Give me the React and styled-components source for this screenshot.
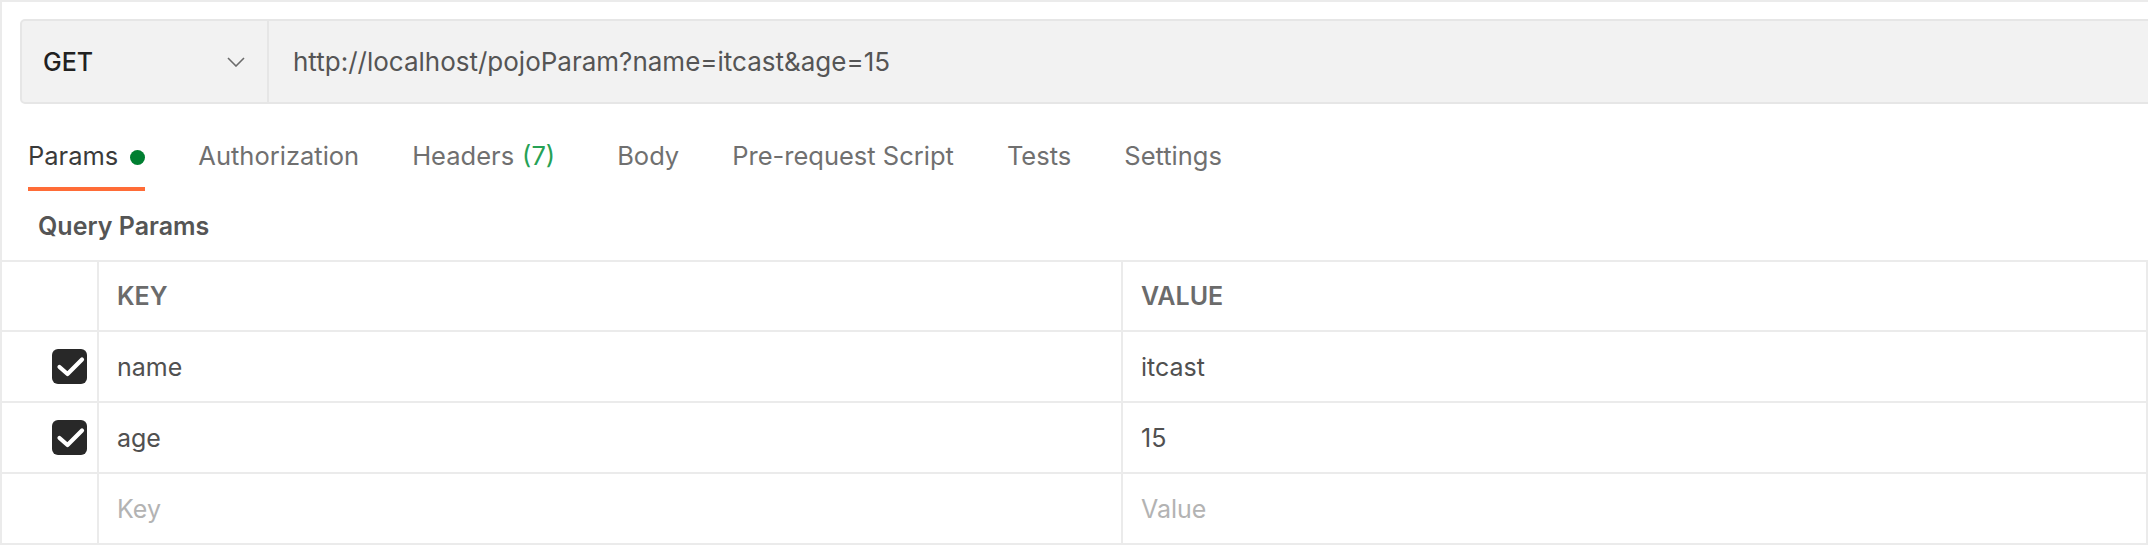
import styled, { createGlobalStyle } from 'styled-components';

const GlobalStyle = createGlobalStyle`
  html, body {
    margin: 0;
    padding: 0;
    background: #fff;
    font-family: Inter, "Noto Sans", sans-serif;
  }
`;

const Page = styled.div`
  width: 2148px;
  height: 545px;
  box-sizing: border-box;
  border-top: 2px solid #ebebeb;
  border-left: 2px solid #ebebeb;
  overflow: hidden;
  display: flex;
  flex-direction: column;
`;

const UrlBar = styled.div`
  display: flex;
  height: 85px;
  box-sizing: border-box;
  margin: 17px -10px 0 18px;
  background: #f2f2f2;
  border: 2px solid #e6e6e6;
  border-radius: 5px;
`;

const MethodSelect = styled.div`
  width: 247px;
  box-sizing: border-box;
  display: flex;
  align-items: center;
  justify-content: space-between;
  padding: 0 22px 0 21px;
  border-right: 2px solid #e6e6e6;
  font-size: 25px;
  font-weight: 500;
  color: #212121;
`;

const UrlInput = styled.div`
  flex: 1;
  display: flex;
  align-items: center;
  padding-left: 24px;
  font-size: 26px;
  color: #555;
`;

const Tabs = styled.div`
  display: flex;
  gap: 53px;
  padding: 20px 0 0 26px;
`;

const Tab = styled.div`
  height: 67px;
  box-sizing: border-box;
  display: flex;
  align-items: center;
  font-size: 25.5px;
  color: ${(p) => (p.$active ? '#3a3a3a' : '#707070')};
  border-bottom: 4px solid ${(p) => (p.$active ? '#ff6c37' : 'transparent')};
`;

const Dot = styled.span`
  width: 15px;
  height: 15px;
  border-radius: 50%;
  background: #007f31;
  margin: 4px 0 0 12px;
`;

const Count = styled.span`
  color: #26a155;
  margin: 0 9px 0 8px;
`;

const SectionLabel = styled.div`
  height: 69px;
  display: flex;
  align-items: center;
  padding-left: 36px;
  font-size: 25px;
  font-weight: 600;
  color: #555;
`;

const Table = styled.div`
  border-top: 2px solid #ebebeb;
  border-right: 2px solid #ebebeb;
`;

const Row = styled.div`
  display: grid;
  grid-template-columns: 97px 1024px 1fr;
  height: ${(p) => (p.$header ? '70px' : '71px')};
  box-sizing: border-box;
  border-bottom: 2px solid #ebebeb;
`;

const Cell = styled.div`
  display: flex;
  align-items: center;
  box-sizing: border-box;
  padding-left: 18px;
  font-size: 25px;
  font-weight: ${(p) => (p.$header ? 600 : 400)};
  color: ${(p) => (p.$placeholder ? '#b3b3b3' : p.$header ? '#6b6b6b' : '#505050')};
  border-right: ${(p) => (p.$last ? 'none' : '2px solid #ebebeb')};
`;

const CheckCell = styled(Cell)`
  justify-content: flex-end;
  padding: 0 10px 0 0;
`;

const Checkbox = styled.div`
  width: 35px;
  height: 35px;
  border-radius: 6px;
  background: #282828;
  display: flex;
  align-items: center;
  justify-content: center;
`;

function Chevron() {
  return (
    <svg width="18" height="10" viewBox="0 0 18 10" fill="none">
      <polyline points="1,1 9,9 17,1" stroke="#6b6b6b" strokeWidth="1.6" />
    </svg>
  );
}

function Check() {
  return (
    <svg width="35" height="35" viewBox="0 0 35 35" fill="none">
      <polyline points="7.5,18 15.5,25 30,10.5" stroke="#fff" strokeWidth="4.2" strokeLinecap="round" strokeLinejoin="round" />
    </svg>
  );
}

const params = [
  { key: 'name', value: 'itcast' },
  { key: 'age', value: '15' },
];

export default function App() {
  return (
    <>
      <GlobalStyle />
      <Page>
        <UrlBar>
          <MethodSelect>
            GET
            <Chevron />
          </MethodSelect>
          <UrlInput>http://localhost/pojoParam?name=itcast&amp;age=15</UrlInput>
        </UrlBar>
        <Tabs>
          <Tab $active>
            Params
            <Dot />
          </Tab>
          <Tab>Authorization</Tab>
          <Tab>
            Headers<Count>(7)</Count>
          </Tab>
          <Tab>Body</Tab>
          <Tab>Pre-request Script</Tab>
          <Tab>Tests</Tab>
          <Tab>Settings</Tab>
        </Tabs>
        <SectionLabel>Query Params</SectionLabel>
        <Table>
          <Row $header>
            <Cell />
            <Cell $header>KEY</Cell>
            <Cell $header $last>VALUE</Cell>
          </Row>
          {params.map((p) => (
            <Row key={p.key}>
              <CheckCell>
                <Checkbox>
                  <Check />
                </Checkbox>
              </CheckCell>
              <Cell>{p.key}</Cell>
              <Cell $last>{p.value}</Cell>
            </Row>
          ))}
          <Row>
            <Cell />
            <Cell $placeholder>Key</Cell>
            <Cell $placeholder $last>Value</Cell>
          </Row>
        </Table>
      </Page>
    </>
  );
}
